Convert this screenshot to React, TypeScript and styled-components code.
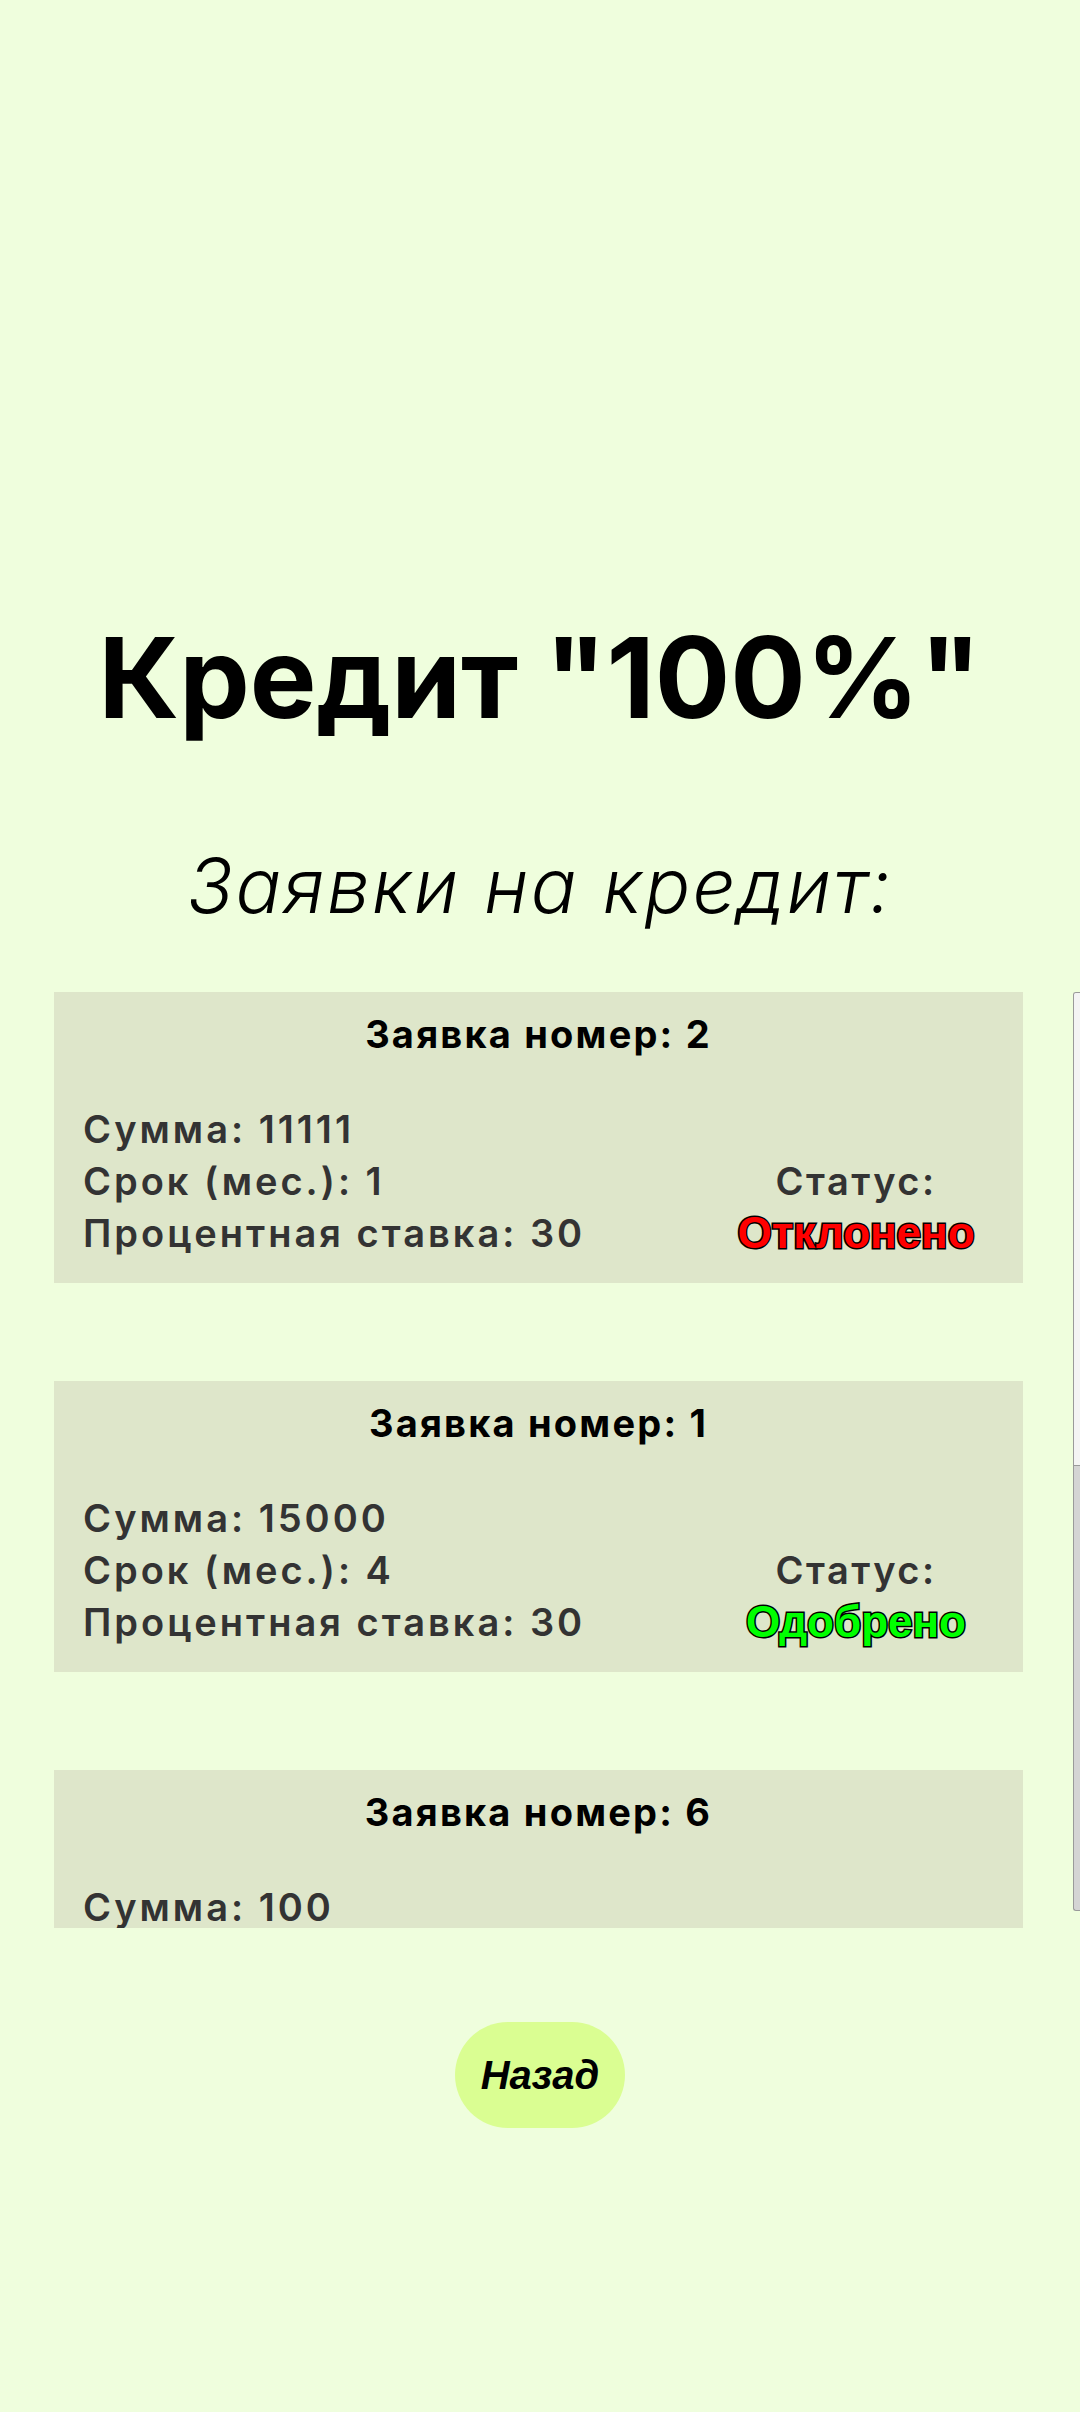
import * as React from 'react'
import styled, { createGlobalStyle } from 'styled-components'

interface IApplication {
  id: number
  sum: number
  months: number
  rate: number
  approved: boolean
}

const applications: IApplication[] = [
  { id: 2, sum: 11111, months: 1, rate: 30, approved: false },
  { id: 1, sum: 15000, months: 4, rate: 30, approved: true },
  { id: 6, sum: 100, months: 2, rate: 30, approved: true },
  { id: 7, sum: 5000, months: 6, rate: 30, approved: false },
  { id: 8, sum: 20000, months: 12, rate: 30, approved: true },
]

const GlobalStyle = createGlobalStyle`
  body {
    margin: 0;
    background-color: #effedd;
    font-family: Inter, "Noto Sans", sans-serif;
  }
`

const Page = styled.div`
  min-height: 2412px;
  display: flex;
  flex-direction: column;
  align-items: center;
  padding-top: 608px;
  box-sizing: border-box;
`

const Title = styled.h1`
  margin: 0;
  font-family: Inter, sans-serif;
  font-weight: 700;
  font-size: 112px;
  line-height: 139px;
  color: #000;
`

const Subtitle = styled.h2`
  margin: 92px 0 0;
  font-family: Inter, sans-serif;
  font-weight: 300;
  font-style: italic;
  font-size: 76px;
  line-height: 92px;
  letter-spacing: 2.3px;
  color: #000;
`

const ListWrap = styled.div`
  position: relative;
  margin-top: 61px;
  width: 100%;
`

const List = styled.div`
  height: 936px;
  overflow-y: auto;
  box-sizing: border-box;
  padding: 0 57px 0 54px;
  display: flex;
  flex-direction: column;
  gap: 98px;
  scrollbar-width: none;
`

// drawn scrollbar, the headless browser hides the native one
const ScrollTrack = styled.div`
  position: absolute;
  top: 0;
  right: 0;
  width: 7px;
  height: 919px;
  box-sizing: border-box;
  background: #d4d4d4;
  border: 1px solid #9a9a9a;
  border-right: none;
  border-radius: 3px 0 0 3px;
  overflow: hidden;
`

const ScrollThumb = styled.div`
  height: 472px;
  background: #f4f4f4;
  border-bottom: 1px solid #9a9a9a;
`

const Card = styled.div`
  flex-shrink: 0;
  background-color: #dee6ca;
  padding: 19px 29px 24px 29px;
`

const CardTitle = styled.div`
  text-align: center;
  font-weight: 700;
  font-size: 38px;
  line-height: 46px;
  letter-spacing: 2.2px;
  color: #000;
`

const CardBody = styled.div`
  margin-top: 46px;
  display: flex;
  justify-content: space-between;
  align-items: flex-end;
`

const Info = styled.div`
  font-weight: 600;
  font-size: 38px;
  line-height: 52px;
  letter-spacing: 3px;
  color: #333;
`

const StatusBox = styled.div`
  width: 276px;
  text-align: center;
  font-weight: 600;
  font-size: 38px;
  line-height: 52px;
  letter-spacing: 2.5px;
  color: #333;
`

const StatusValue = styled.div<{ $approved: boolean }>`
  font-family: "Liberation Sans", Arial, sans-serif;
  font-weight: 700;
  font-size: 44px;
  line-height: 52px;
  letter-spacing: 0;
  color: ${p => (p.$approved ? '#00ff00' : '#ff0000')};
  -webkit-text-stroke: 3px #000;
  paint-order: stroke fill;
`

const BackButton = styled.button`
  margin-top: 94px;
  width: 170px;
  height: 106px;
  border: none;
  border-radius: 53px;
  background-color: #dafe92;
  font-family: "Liberation Sans", Arial, sans-serif;
  font-weight: 700;
  font-style: italic;
  font-size: 40px;
  color: #000;
  padding: 0;
  cursor: pointer;
`

const ApplicationCard: React.FC<{ app: IApplication }> = ({ app }) => (
  <Card>
    <CardTitle>Заявка номер: {app.id}</CardTitle>
    <CardBody>
      <Info>
        <div>Сумма: {app.sum}</div>
        <div>Срок (мес.): {app.months}</div>
        <div>Процентная ставка: {app.rate}</div>
      </Info>
      <StatusBox>
        <div>Статус:</div>
        <StatusValue $approved={app.approved}>
          {app.approved ? 'Одобрено' : 'Отклонено'}
        </StatusValue>
      </StatusBox>
    </CardBody>
  </Card>
)

export default function App() {
  return (
    <>
      <GlobalStyle />
      <Page>
        <Title>Кредит "100%"</Title>
        <Subtitle>Заявки на кредит:</Subtitle>
        <ListWrap>
          <List>
            {applications.map(a => (
              <ApplicationCard key={a.id} app={a} />
            ))}
          </List>
          <ScrollTrack>
            <ScrollThumb />
          </ScrollTrack>
        </ListWrap>
        <BackButton>Назад</BackButton>
      </Page>
    </>
  )
}
